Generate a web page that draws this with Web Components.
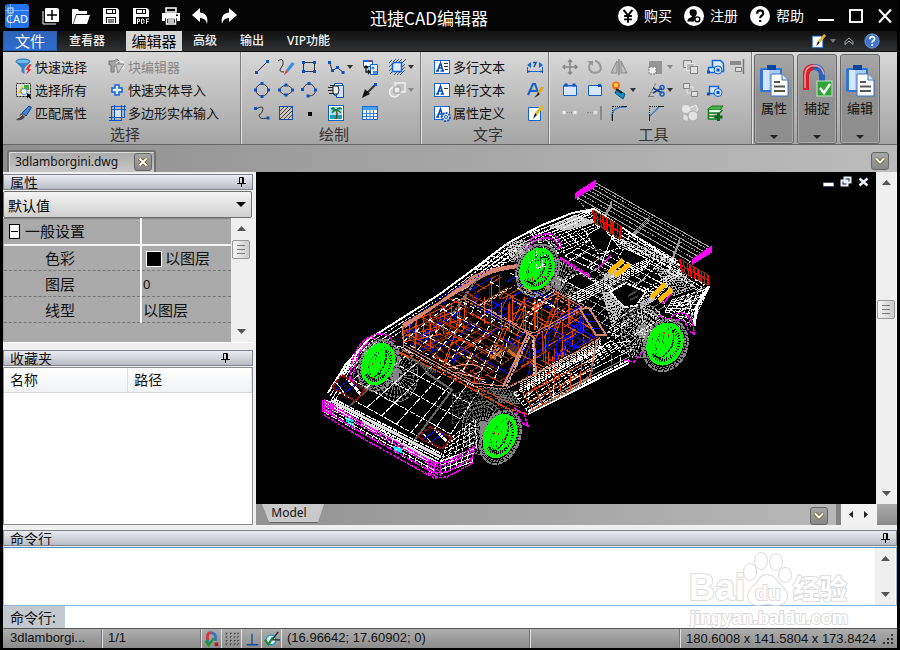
<!DOCTYPE html>
<html lang="zh-CN">
<head>
<meta charset="utf-8">
<title>迅捷CAD编辑器</title>
<style>
html,body{margin:0;height:100%;background:#000}
body{font:13px/16px "Noto Sans","Noto Sans CJK SC",sans-serif;color:#111}
</style>
</head>
<body>
<cad-app></cad-app>
<script>
const define = (name, css, html, setup) => customElements.define(name, class extends HTMLElement {
  connectedCallback() {
    if (this.shadowRoot) return;
    const root = this.attachShadow({ mode: 'open' });
    root.innerHTML = `<style>:host{display:block}*,:host{box-sizing:border-box}button{font:inherit;color:inherit;background:none;border:0;padding:0;margin:0;display:flex;align-items:center}${css}</style>` +
      (typeof html === 'function' ? html(this) : html);
    if (setup) setup(this, root);
  }
});

/* ---------- icons ---------- */
const n = (...p) => p.map(([x, y]) => `<rect x="${x - 1.5}" y="${y - 1.5}" width="3" height="3" fill="#0c50c8" stroke="none"/>`).join('');
const A = `<rect x="1.5" y="2.5" width="15" height="13" fill="#fff" stroke="#1464d8"/><path d="M3 13h3M7.5 13h3.5M4.500 13L7.500 5L10 13M5.500 10h4" fill="none" stroke="#0a4cb8" stroke-width="1.6"/>`;
const disk = `<path d="M1 1h14l2 2v14H1z" fill="#fff"/><path d="M4 2h10v5H4z" fill="#000"/><path d="M5 3h5v3H5zM11 3h2v3h-2z" fill="#fff"/>`;
const clip = `<path d="M2 4h20v24H2q-2 0-2-2V6q0-2 2-2z" fill="#2f74d8"/><path d="M3 6h17v20H3z" fill="#a9cbf5"/><path d="M3 6h6v20H3z" fill="#d4e6fc"/><rect x="7" y="1" width="9" height="5" fill="#0c459c"/><path d="M11 10h11l6 6v16H11z" fill="#fff" stroke="#3a6fc0"/><path d="M22 10v6h6" fill="#dde6f5" stroke="#3a6fc0"/><path d="M14 18h6M14 22.5h11M14 27h11" stroke="#555" stroke-width="2"/>`;
const I = {
  new: `<path d="M4 1h11q2 0 2 2v11q0 1-1 1H4q-1 0-1-1V2q0-1 1-1z" fill="#fff"/><path d="M10 3v10M5 8h10" stroke="#000" stroke-width="1.5"/><path d="M1 4v13h13" stroke="#fff" fill="none"/>`,
  open: `<path d="M0 17V2h6l1 2h8v3H4L1 17z" fill="#fff"/><path d="M4.500 8H18l-3 9H1.500z" fill="#fff"/>`,
  save: disk + `<path d="M4 10h10v6H4z" fill="#000"/><path d="M5 11h8v5H5z" fill="#fff"/><path d="M6 13h6M6 15h6" stroke="#000"/>`,
  pdf: disk + `<path d="M4 10h14v8H4z" fill="#000"/><path d="M5.500 17v-5h2v2.500h-2M9.500 12v4.500h1.500l1-1v-2.500l-1-1zM14.500 17v-5h2.500M14.500 14.500h2" stroke="#fff" fill="none"/>`,
  print: `<path d="M4 1h10v4H4z" fill="none" stroke="#fff" stroke-width="1.500"/><path d="M0 6h18v8h-3v-3H3v3H0z" fill="#fff"/><path d="M4.500 11h9v6h-9zM6 13h6M6 15h6" fill="none" stroke="#fff" stroke-width="1.500"/><rect x="14" y="7.500" width="2" height="1.500" fill="#000"/>`,
  undo: `<path d="M0 8L8 1v4.500q9 1 7 11.500q-1-6-7-6v4z" fill="#fff"/>`,
  redo: `<path d="M18 8L10 1v4.500Q1 6.500 3 17q1-6 7-6v4z" fill="#fff"/>`,
  buy: `<circle cx="9" cy="9" r="9" fill="#fff"/><path d="M5 3.500l4 5 4-5M9 8v7M5.500 9h7M5.500 12h7" fill="none" stroke="#000" stroke-width="1.700"/>`,
  user: `<circle cx="9" cy="9" r="9" fill="#fff"/><path d="M8 3q4 0 3.500 4q-.5 2-1.500 2.500v1l-1 3.500H3q0-3 4-4V9Q5 8 5 6q0-3 3-3z" fill="#000"/><circle cx="12" cy="12" r="2.200" fill="#fff" stroke="#000" stroke-width="1.300"/>`,
  help: `<circle cx="9" cy="9" r="9" fill="#fff"/><path d="M6.500 7q0-3 2.700-3t2.700 2.500q0 1.500-1.500 2.300Q9.200 9.500 9.200 11M9.200 12.500v2" fill="none" stroke="#000" stroke-width="2"/>`,
  helpblue: `<circle cx="9" cy="9" r="8" fill="#3c76cc" stroke="#7ba7e5"/><path d="M6.500 7q0-3 2.700-3t2.700 2.500q0 1.500-1.500 2.300Q9.200 9.500 9.200 11M9.200 12.500v2" fill="none" stroke="#fff" stroke-width="2"/>`,
  filter: `<ellipse cx="8" cy="3.500" rx="7" ry="2.500" fill="#70b8e8" stroke="#1d6fae"/><path d="M1 4q6 4 14 0L9.500 10v6L6.500 14v-4z" fill="#2f86c8"/><path d="M14 6l-4 6h3l-3 6 7-7h-3l3-5z" fill="#e5281f" stroke="#fff" stroke-width=".4"/>`,
  selall: `<rect x="1.500" y="2.500" width="14" height="13" fill="#ddd" stroke="#111" stroke-dasharray="2 1"/><rect x="9" y="4" width="5" height="5" fill="#3cae38"/><path d="M3 12l4-7 4 8z" fill="#f2b90c"/><circle cx="9" cy="10.500" r="3" fill="#fff" stroke="#4a8de0"/><path d="M12 12v5.500l1.500-1.500 2 2 1-1-2-2 1.500-1z" fill="#000"/>`,
  brush: `<path d="M7 9l7-7 2.500 1.500L11 12z" fill="#3f86dc" stroke="#173f7a"/><path d="M6 9l4 4-2 2q-3 2-7 1l3-3z" fill="#4a4a4a"/><path d="M3 14l4-3" stroke="#ccc"/>`,
  blockedit: `<path d="M1 3h5l3-2 2 2v4l-2 1H6v6H3V7H1z" fill="#a5a5a5" stroke="#777"/><circle cx="12" cy="7" r="4" fill="none" stroke="#fff"/><path d="M8 6h8l-6 9z" fill="#c9c9c9" stroke="#888"/>`,
  cross: `<path d="M7 4h4v3h3v4h-3v3H7v-3H4V7h3z" fill="#e3effd" stroke="#1266d6" stroke-width="1.500"/>`,
  poly: `<rect x="6" y="6" width="8" height="7" fill="#cfe0f5"/><path d="M3.500 3v14M6.500 1v16M13.500 1v15M16.500 1v13M3 2.500h15M3 5.500h15M1 13.500h15M1 16.500h13" stroke="#0b57c5" fill="none"/>`,
  line: `<path d="M4 14L14 4" stroke="#333"/>` + n([3.5, 14.5], [14.5, 3.5]),
  free: `<path d="M1 3q4-3 5 0t-2 7 3 4" stroke="#333" fill="none"/><path d="M9 12l6-8 2.500 2L11 14z" fill="#3b8de6"/><path d="M9 12l2 2-4 3z" fill="#e53030"/>`,
  rect: `<rect x="3.500" y="4.500" width="11" height="9" fill="none" stroke="#333"/>` + n([3.5, 4.5], [14.5, 4.5], [3.5, 13.5], [14.5, 13.5]),
  pline: `<path d="M2.500 4.500L5.500 13L10 9.500L16 14" stroke="#333" fill="none"/>` + n([2.5, 4.5], [5.5, 12.5], [10.5, 9.5], [16, 14.5]),
  insert: `<path d="M2.500 2.500h9v6h-9z" fill="#fff" stroke="#1266d6"/><path d="M2 3h6" stroke="#1266d6" stroke-width="2"/><path d="M8 3h3" stroke="#e02020" stroke-width="2"/><path d="M9.500 6.500h7v10h-7z" fill="#e8f1fd" stroke="#1266d6"/><circle cx="12" cy="10" r="1.500" fill="#4a8de0"/><path d="M12 13h4v3h-4z" fill="#4a8de0"/><path d="M5 8v6h4M3 10l2-2 2 2M7 12l2 2-2 2" fill="none" stroke="#111" stroke-width="1.300"/>`,
  region: `<path d="M1 5l3-3M1 9l3-3M1 13l3-3M2 16l3-3M5 4l3-3M8 4l3-3M11 4l3-3M14 5l4-4M14 9l3-3M14 12l3-3M6 17l3-3M9 17l3-3M12 17l5-5" stroke="#456"/><path d="M4.500 5.500l2-1h7v9h-9z" fill="#dceaff" stroke="#1266d6" stroke-width="1.500"/>`,
  circle: `<circle cx="9" cy="9" r="6" fill="none" stroke="#333"/>` + n([9, 2.5], [2.5, 9], [15.5, 9], [9, 15.5]),
  ellipse: `<ellipse cx="9" cy="9" rx="6" ry="4.500" fill="none" stroke="#333"/>` + n([9, 4], [2.5, 9], [15.5, 9], [9, 14]),
  arc: `<path d="M3 9q1-6 6-6t6 6-7 6" fill="none" stroke="#333"/>` + n([2.5, 8.5], [9, 2.5], [15.5, 9], [8, 15]),
  sheet: `<path d="M7.500 2.500h8v12h-8z" fill="#fff" stroke="#1455ac"/><path d="M9.500 4.500h7v12h-7z" fill="#cfe2fb" stroke="#1455ac"/><path d="M6 5h5q2 4 0 8H6z" fill="#eee" stroke="#222"/><path d="M1 6.500h5M3 4.500h4M1 9.500h5M2 12.500h5" stroke="#222" fill="none"/>`,
  ray: `<path d="M4 14L14 4" stroke="#333" stroke-width="2"/><path d="M1 17l3-9 5 5z" fill="#111"/>` + n([14.5, 3.5]),
  union: `<path d="M7 2h10v9H7z" fill="#c4c4c4" stroke="#eee" stroke-width="1.500"/><circle cx="6.500" cy="11" r="5" fill="#ccc" stroke="#f2f2f2" stroke-width="1.500"/><path d="M6 6h6v6H6z" fill="#eee" stroke="#999"/>`,
  spline: `<path d="M3 5Q10 1 10 5T6 11q0 5 8 3" fill="none" stroke="#333"/>` + n([2.5, 4.5], [15, 14]),
  hatch: `<rect x="2.500" y="2.500" width="13" height="13" fill="#c9c4ba" stroke="#1a4a9a"/><path d="M3 7l4-4M3 11l8-8M3 15l12-12M7 15l8-8M11 15l4-4" stroke="#444"/>`,
  point: `<rect x="8" y="8" width="4" height="4" fill="#000"/>`,
  image: `<rect x="1.500" y="1.500" width="15" height="15" fill="#fff" stroke="#0a5fc2"/><path d="M3 3h12v8H3z" fill="#a6dcf5"/><path d="M3 11h12v4H3z" fill="#18a0c0"/><path d="M9 15q2-5 0-9" stroke="#6b4510" fill="none" stroke-width="1.500"/><path d="M9 6Q6 2 4 5q2 0 5 1Q5 6 5 9q2-2 4-3 4-4 6-1-3-1-6 1 4 0 5 3-2-2-5-3z" fill="#0c7a38" stroke="#0c7a38"/>`,
  table: `<rect x="1.500" y="2.500" width="15" height="13" fill="#fff" stroke="#1868d0"/><path d="M2 3h14v3H2z" fill="#4aa0f0"/><path d="M2 9.500h14M2 12.500h14M5.500 6v10M9 6v10M12.500 6v10" stroke="#3480da"/>`,
  mtext: A + `<path d="M11 5.500h4M11 8.500h4M12 11.500h3" stroke="#333"/>`,
  stext: A + `<path d="M11 7.500h4" stroke="#333"/>`,
  attr: A + `<circle cx="13" cy="13" r="4" fill="#d8e8ff" stroke="#1a5ab8" stroke-width="2" stroke-dasharray="2 1"/><circle cx="13" cy="13" r="1.500" fill="#fff" stroke="#1a5ab8"/>`,
  dim: `<path d="M1.500 9v6M16.500 9v6M2 13.500h14" stroke="#1266d6" fill="none"/><path d="M1 7l4-3v6zM17 7l-4-3v6z" fill="#1266d6"/><path d="M7 4.500h3L8 9M1 13.500h3M14 13.500h3" stroke="#0a4cb8" fill="none" stroke-width="1.500"/>`,
  tstyle: `<path d="M2 14L7 3h2l4 11M4 10h7" stroke="#1460c8" fill="none" stroke-width="2"/><path d="M17 6l-5 6" stroke="#e3a012" stroke-width="2.500"/><path d="M13 11l-5 6 5-3z" fill="#222"/>`,
  edit: `<path d="M2.500 3.500h10l2 2v11h-12z" fill="#fff" stroke="#0f62cf"/><path d="M17 2l-7 8" stroke="#e8b820" stroke-width="3"/><path d="M9 9l2 2-4 4z" fill="#222"/>`,
  move: `<path d="M9 2v14M2 9h14M7 4l2-2 2 2M7 14l2 2 2-2M4 7L2 9l2 2M14 7l2 2-2 2" fill="none" stroke="#878787" stroke-width="1.500"/>`,
  rotate: `<path d="M4 5Q1 14 9 15q8-1 5-8-2-4-5-4" fill="none" stroke="#999" stroke-width="2"/><path d="M1 3h6v5z" fill="#999"/>`,
  mirror: `<path d="M7 3v12H1zM11 3v12h6z" fill="#bdbdbd" stroke="#888"/><path d="M9 1v16" stroke="#666"/>`,
  scale: `<path d="M2 3h13v13H2z" fill="#969696"/><rect x="2" y="9" width="7" height="7" fill="#eee" stroke="#777" stroke-dasharray="2 1"/>`,
  copy: `<path d="M2.500 2.500h8v7h-8z" fill="#d9d9d9" stroke="#858585"/><path d="M5.500 5.500h8v7h-8z" fill="#bbb" stroke="#eee"/><path d="M9.500 8.500h7v7h-7z" fill="#e2e2e2" stroke="#858585"/>`,
  array: `<path d="M6 6h6v6H6z" fill="#bbb" stroke="#eee"/><path d="M2.500 2.500h6v5h-6zM10.500 10.500h6v5h-6z" fill="#dedede" stroke="#858585"/>`,
  xform: `<path d="M6.500 2.500h8l3 3v8h-11z" fill="#dceaff" stroke="#1266d6" stroke-width="1.500"/><path d="M2.500 9.500h9v5h-9z" fill="#dceaff" stroke="#1266d6" stroke-width="1.500"/><circle cx="12" cy="12" r="4" fill="#cfe2fb" stroke="#1266d6"/>` + n([2.5, 14], [12, 12]),
  xform2: `<path d="M3.500 5.500h9v7h-9z" fill="#dceaff" stroke="#1266d6" stroke-width="1.500"/><circle cx="12" cy="11.500" r="4" fill="#cfe2fb" stroke="#1266d6"/>` + n([2.5, 13], [12, 11.5]),
  align: `<path d="M1 3h11v4H1z" fill="#8a8a8a"/><path d="M6.500 9.500h6v4h-6z" fill="#ddd" stroke="#777"/><path d="M14.500 1v15" stroke="#777" stroke-width="1.500"/>`,
  box: `<path d="M2.500 4.500h13v10h-13z" fill="#d6e8ff" stroke="#1a5fc0"/><path d="M3 5h12" stroke="#1a5fc0"/>` + n([5, 4], [13, 4]),
  box2: `<path d="M2.500 4.500h13v10h-13z" fill="#d6e8ff" stroke="#1a5fc0"/>` + n([13.5, 4.5]),
  explode: `<path d="M7 8l8 5-2 5-8-6z" fill="#168bc2" stroke="#0a537f"/><circle cx="6" cy="4.500" r="4" fill="#f07020"/><circle cx="6" cy="4" r="2" fill="#ffd34a"/><path d="M6 8l6 4" stroke="#222" stroke-width="2"/>`,
  trim: `<path d="M2 15L9 2" stroke="#555" stroke-dasharray="2 1"/><path d="M6 7l9 5M15 7L6 12" stroke="#14438a" stroke-width="1.500"/><circle cx="15" cy="6.500" r="2" fill="none" stroke="#1a5fc0" stroke-width="1.500"/><circle cx="15" cy="13" r="2" fill="none" stroke="#1a5fc0" stroke-width="1.500"/><path d="M1 15.500h6" stroke="#777"/>`,
  brk: `<path d="M1 6.500h4v4H1zM12 6.500h4v4h-4z" fill="#eee" stroke="#bbb"/><path d="M6 8.500h5" stroke="#888" stroke-dasharray="1 1"/>`,
  extend: `<path d="M1 8.500h4M6 8.500h6" stroke="#888" stroke-dasharray="2 1"/><path d="M7 6h5v5H7z" fill="#ddd" stroke="#aaa"/><path d="M15 2v14" stroke="#888" stroke-width="2"/>`,
  fillet: `<path d="M2 17V10q2-7 11-7h3" fill="none" stroke="#3680cc" stroke-width="1.500"/><path d="M2.500 2v15M3 2.500h13" stroke="#222" stroke-dasharray="1 1"/><path d="M2.500 11v6M11 2.500h6" stroke="#222"/>`,
  chamfer: `<path d="M3 12l9-9" stroke="#3680cc" stroke-width="1.500"/><path d="M2.500 2v15M3 2.500h13" stroke="#222" stroke-dasharray="1 1"/><path d="M2.500 11v6M11 2.500h6" stroke="#222"/>`,
  parts: `<circle cx="5" cy="5" r="4" fill="#e6e6e6"/><path d="M8 4l7-3 2 5-7 4z" fill="#ccc" stroke="#eee"/><path d="M3 10l5 3-2 4-4-2z" fill="#ddd"/><circle cx="12" cy="12" r="5" fill="#e2e2e2" stroke="#aaa"/>`,
  layers: `<path d="M2 5l4-3h11l-3 4H2z" fill="#49b547" stroke="#16751c"/><path d="M2.500 6v3h11l3-3M2.500 9v3h11M2.500 12v3h9" fill="#e9f7e8" stroke="#187a22" stroke-width="1.500"/><path d="M12.500 9v8M8.500 13h8" stroke="#0d6a1c" stroke-width="3"/>`,
  magstat: `<path d="M4 14V6q0-4 4-4t5 4v5" fill="none" stroke="#3a6ec8" stroke-width="3"/><path d="M4 10V6q0-4 4-4" fill="none" stroke="#d8383a" stroke-width="3"/><path d="M2 11l3 5 6-8" fill="none" stroke="#1b9a26" stroke-width="2.500"/><rect x="12" y="13" width="4" height="4" fill="#c01616"/>`,
  grid: [3, 7, 11, 15].map(y => [2, 7, 11, 15].map(x => `<rect x="${x}" y="${y - 1}" width="2" height="2" fill="#333"/><rect x="${x + 1}" y="${y}" width="1" height="1" fill="#eee"/>`).join('')).join(''),
  ortho: `<path d="M9 3v12M3 15.500h13" stroke="#144da0" stroke-width="1.500" fill="none"/>`,
  osnap: `<circle cx="8" cy="10" r="5.500" fill="#e7f4fb" stroke="#1a9cd0" stroke-width="1.500"/><path d="M9 10l7-9M9 10h9" stroke="#222" stroke-width="1.500"/><path d="M1 10l4 5 5-8" stroke="#1b8a26" stroke-width="2.500" fill="none"/>`,
};
define('cad-icon', `:host{display:inline-block;width:var(--s,18px);height:var(--s,18px);flex:none}svg{display:block;width:100%;height:100%;overflow:visible}`,
  el => `<svg viewBox="0 0 18 18" aria-hidden="true">${I[el.getAttribute('name')] || ''}</svg>`);

define('cad-bigicon', `:host{width:28px;height:32px}svg{display:block;width:28px;height:32px;overflow:visible}`, el =>
  `<svg viewBox="0 0 28 32" aria-hidden="true">${el.getAttribute('name') === 'clip' ? clip :
  `<path d="M3 26V12Q3 3 11 3t8 9v7" fill="none" stroke="#2d63c0" stroke-width="6"/><path d="M3 26V12Q3 3 11 3" fill="none" stroke="#d91e25" stroke-width="6"/><path d="M2 24V12Q2 2 11 1.500q8 0 10 9" fill="none" stroke="#f4a0a0" stroke-width="1.500"/><rect x="14" y="17" width="15" height="15" fill="#2fa23a" stroke="#bfe6c0"/><path d="M17 24l4 5 6-9" stroke="#fff" stroke-width="2.500" fill="none"/>`}</svg>`);

/* ---------- title bar ---------- */
define('title-bar', `:host{display:flex;align-items:center;height:31px;background:#050505;color:#fff;padding:0 5px 0 2px;font-size:14px}
.logo{width:24px;height:24px;margin-right:7px}.logo svg{display:block}
.q button{width:30px;height:30px;justify-content:center}.q,.r,.w{display:flex;align-items:center}.q button:last-child{width:24px}
h1{flex:1;margin:0;text-align:center;font:17px/24px "Noto Sans CJK SC",sans-serif;padding-top:4px}
.r button{gap:6px;margin-right:12px;--s:20px}.r{margin-right:2px}.w button{height:20px;width:14px;margin-left:15px;justify-content:center}.w button:first-child{margin-left:0;width:16px}`,
`<div class="logo"><svg width="24" height="24"><rect width="24" height="24" rx="3" fill="#2374ea"/><path d="M0 6.500h24M5.500 0v24" stroke="#6ca8f8"/><rect x="3" y="4" width="5" height="5" fill="none" stroke="#d8e8ff"/><text x="12" y="19" text-anchor="middle" font-family="Noto Sans" font-size="11" fill="#fff">CAD</text></svg></div>
<div class="q">${['new', 'open', 'save', 'pdf', 'print', 'undo', 'redo'].map(i => `<button aria-label="${i}"><cad-icon name="${i}"></cad-icon></button>`).join('')}</div>
<h1>迅捷CAD编辑器</h1>
<div class="r"><button><cad-icon name="buy"></cad-icon>购买</button><button><cad-icon name="user"></cad-icon>注册</button><button><cad-icon name="help"></cad-icon>帮助</button></div>
<div class="w"><button aria-label="最小化"><svg width="16" height="18"><path d="M0 13h16" stroke="#fff" stroke-width="2"/></svg></button><button aria-label="最大化"><svg width="14" height="16"><rect x="1" y="2" width="12" height="12" fill="none" stroke="#fff" stroke-width="2"/></svg></button><button aria-label="关闭"><svg width="14" height="16"><path d="M1 1.500l12 13M13 1.500l-12 13" stroke="#fff" stroke-width="2"/></svg></button></div>`);

/* ---------- tabs ---------- */
define('tab-strip', `:host{display:flex;height:21px;background:linear-gradient(#111,#303133);border-bottom:1px solid #111;color:#f4f4f4}
nav{display:flex;flex:1}nav button{padding:0 12px 0 11px;font-weight:500;font-size:12px;white-space:nowrap;height:20px}
nav .file{width:54px;justify-content:center;padding:0;font-size:15px;font-weight:400;background:linear-gradient(#2f62b4,#2d6cd0);border:1px solid #2b5aa5;border-top:0}
nav .view{margin-right:9px;padding-left:12px}nav .on{width:56px;padding:0;justify-content:center;font-size:15px;color:#000;background:#d6d6d6;height:20px;font-weight:400}
.r{display:flex;align-items:center;gap:0;padding-right:17px;--s:16px}.d{width:24px;justify-content:flex-start}.d:after{content:"";border:3px solid transparent;border-top:4px solid #777;border-bottom:0;margin-left:4px}.u{width:30px;justify-content:center}`,
`<nav><button class="file">文件</button><button class="view">查看器</button><button class="on">编辑器</button><button>高级</button><button>输出</button><button>VIP功能</button></nav>
<div class="r"><button class="d" aria-label="编辑"><cad-icon name="edit"></cad-icon></button><button class="u" aria-label="收起"><svg width="10" height="8"><path d="M1 4.500l4-3.500 4 3.500v3L5 4 1 7.500z" fill="none" stroke="#aaa"/></svg></button><button aria-label="帮助"><cad-icon name="helpblue"></cad-icon></button></div>`);

/* ---------- ribbon ---------- */
define('tool-button', `:host{display:flex;height:23px;align-items:center}button{gap:2px;white-space:nowrap;height:22px;text-align:left}:host([off]) button{color:#868686}
:host([drop]) button:after{content:"";border:3px solid transparent;border-top:4px solid #333;border-bottom:0}:host([off][drop]) button:after{border-top-color:#888}`,
el => `<button aria-label="${el.textContent || el.getAttribute('icon')}"><cad-icon name="${el.getAttribute('icon')}"></cad-icon><slot></slot></button>`);
define('ribbon-group', `:host{display:flex;flex-direction:column;padding:3px 0 1px 11px;border-right:1px solid #7c7c7c;box-shadow:1px 0 #e2e2e2;margin:0 0 0 1px}
.g{display:grid;grid-template-columns:var(--cols);grid-auto-rows:23px;flex:1}.l{text-align:center;font-size:15px;line-height:20px;margin-left:-5px;color:#333}`,
el => `<div class="g"><slot></slot></div><div class="l">${el.getAttribute('label')}</div>`);
define('big-button', `button{flex-direction:column;width:40px;height:90px;border:1px solid #686868;border-radius:3px;background:linear-gradient(#a8a8a8,#919191 40%,#8d8d8d);padding-top:9px;font-size:13px;box-shadow:inset 0 0 0 1px #a9a9a9}
slot{display:block;margin-top:4px}i{margin-top:auto;margin-bottom:4px;border:4px solid transparent;border-top:4px solid #222;border-bottom:0}`,
el => `<button><cad-bigicon name="${el.getAttribute('icon')}"></cad-bigicon><slot></slot><i></i></button>`);
const tb = s => s.trim().split(/\s+/).map(t => { if (t === '_') return '<span></span>'; const [i, f = '', l = ''] = t.split(':'); return `<tool-button icon="${i}"${f.includes('o') ? ' off' : ''}${f.includes('d') ? ' drop' : ''}>${l}</tool-button>`; }).join('');
define('cad-ribbon', `:host{display:flex;height:93px;background:linear-gradient(#d8d8d8,#c5c5c5 35%,#a5a5a5);border-bottom:1px solid #666}
.b{display:flex;gap:3px;padding:2px 0 0 2px}`,
`<ribbon-group label="选择" style="--cols:93px 1fr;width:237px">${tb('filter::快速选择 blockedit:o:块编辑器 selall::选择所有 cross::快速实体导入 brush::匹配属性 poly::多边形实体输入')}</ribbon-group>
<ribbon-group label="绘制" style="--cols:24px 23px 27px 34px 27px 1fr;width:179px">${tb('line free rect pline:d insert region:d circle ellipse arc sheet ray union:od spline hatch point image table')}</ribbon-group>
<ribbon-group label="文字" style="--cols:93px 1fr;width:127px">${tb('mtext::多行文本 dim stext::单行文本 tstyle attr::属性定义 edit')}</ribbon-group>
<ribbon-group label="工具" style="--cols:25px 24px 37px 34px 25px 23px 1fr;width:202px">${tb('move:o rotate:o mirror:o scale:od copy:o xform align:o box box2 explode:d trim:d array:o xform2 _ brk:o extend:o fillet chamfer parts:o layers')}</ribbon-group>
<div class="b"><big-button icon="clip">属性</big-button><big-button icon="magnet">捕捉</big-button><big-button icon="clip">编辑</big-button></div>`);

/* ---------- document tabs ---------- */
define('chevron-button', `button{width:18px;height:18px;border:1px solid #666;border-radius:3px;background:linear-gradient(#a5a5a5,#888);justify-content:center}`,
el => `<button aria-label="${el.getAttribute('label')}"><svg width="10" height="8">${el.hasAttribute('close') ? '<path d="M1.500 .5l7 7M8.500 .5l-7 7" stroke="#6b5a10" stroke-width="3.500"/><path d="M1.500 .5l7 7M8.500 .5l-7 7" stroke="#fff" stroke-width="2"/>' : '<path d="M1 1.500l4 4 4-4" fill="none" stroke="#6b5a10" stroke-width="3.500"/><path d="M1 1.500l4 4 4-4" fill="none" stroke="#fff" stroke-width="2"/>'}</svg></button>`);
define('doc-bar', `:host{display:flex;align-items:flex-end;justify-content:space-between;height:27px;background:linear-gradient(90deg,#8f8f8f,#bcbcbc);padding:0 8px 0 4px}
.t{display:flex;align-items:center;gap:16px;height:22px;border:2px solid #707070;border-bottom:0;border-radius:3px 3px 0 0;background:linear-gradient(#a9a9a9,#c8c8c8);padding:0 2px 0 6px;font-size:12px;box-shadow:inset 1px 1px #ddd}.e{margin-bottom:2px}`,
`<div class="t"><span>3dlamborgini.dwg</span><chevron-button close label="关闭"></chevron-button></div><chevron-button class="e" label="文档列表"></chevron-button>`);

/* ---------- docked panels ---------- */
define('dock-panel', `:host{display:flex;flex-direction:column}header{display:flex;justify-content:space-between;align-items:center;height:16px;flex:none;border:1px solid #80838a;background:linear-gradient(#ebedf2,#b9bcc5);padding:0 6px;overflow:hidden;font-size:14px;line-height:15px}
.b{flex:1;min-height:0;display:flex;flex-direction:column;padding-top:1px}:host([inset]) header{padding-right:22px}`,
el => `<header><span>${el.getAttribute('label')}</span><button aria-label="固定"><svg width="9" height="10"><path d="M2.500 6V.5h4V6M5.500 1v5M0 6.500h9M4.500 7v3" fill="none" stroke="#000"/></svg></button></header><div class="b"><slot></slot></div>`);
define('scroll-bar', `:host{display:flex;flex-direction:column;width:20px;background:#efefef;align-items:center;justify-content:space-between;padding:8px 0}
button{width:9px;height:5px}svg{display:block}.th{width:18px;height:19px;border:1px solid #989898;border-radius:2px;background:linear-gradient(90deg,#f6f6f6,#ccc);justify-content:center}`,
el => `<button aria-label="上"><svg width="9" height="5"><path d="M0 5L4.500 0 9 5z" fill="#555"/></svg></button>${el.hasAttribute('pos') ? `<div style="flex:${el.getAttribute('pos')}"></div><button class="th" aria-label="滑块"><svg width="9" height="11"><path d="M0 1.500h8M0 5.500h8M0 9.500h8" stroke="#777"/></svg></button><div style="flex:${100 - el.getAttribute('pos')}"></div>` : ''}<button aria-label="下"><svg width="9" height="5"><path d="M0 0L4.500 5 9 0z" fill="#555"/></svg></button>`);
define('property-grid', `:host{display:flex;flex-direction:column}.s{position:relative;height:27px;margin-right:1px}
select{appearance:none;display:block;width:100%;height:27px;border:1px solid #707070;border-radius:2px;background:linear-gradient(#f4f4f4,#cfcfcf);font:14px "Noto Sans CJK SC",sans-serif;padding:0 4px;color:#000}
.s:after{content:"";position:absolute;right:6px;top:11px;border:5px solid transparent;border-top:5px solid #000;border-bottom:0}
.g{display:flex;height:124px;background:#efefef;border-left:1px solid #999;padding-right:2px}.t{flex:1;min-width:0;background:#aaa}table{width:100%;border-collapse:collapse;table-layout:fixed;font-size:15px}
td{height:26px;padding:0 0 0 1px;border-bottom:1px dashed #777;line-height:20px;vertical-align:middle}td:first-child{width:137px;padding-left:41px;border-right:2px solid #f5f5f5}
tr:first-child td{border-bottom:2px solid #f5f5f5;border-top:1px solid #888}tr:first-child td:first-child{padding-left:5px}
.h{display:flex;align-items:center;gap:5px}.m{width:11px;height:15px;border:1px solid #000;background:#fff;justify-content:center}.m:after{content:"";width:7px;height:1px;background:#000}
.k{display:inline-block;width:16px;height:16px;border:1px solid #fff;background:#000;margin:0 3px;vertical-align:-3px}.z{font-size:13px}`,
`<div class="s"><select aria-label="属性集"><option>默认值</option></select></div><div class="g"><div class="t"><table><tbody><tr><td><div class="h"><button class="m" aria-label="折叠"></button>一般设置</div></td><td></td></tr><tr><td>色彩</td><td><span class="k"></span>以图层</td></tr><tr><td>图层</td><td class="z">0</td></tr><tr><td>线型</td><td>以图层</td></tr></tbody></table></div><scroll-bar pos="12"></scroll-bar></div>`);
define('favorites-list', `:host{flex:1;background:#fff;border:1px solid #8a8d92}table{width:100%;border-collapse:collapse;table-layout:fixed;font-size:14px}th{height:24px;font-weight:400;text-align:left;padding:1px 0 0 6px;background:linear-gradient(#fff,#f1f2f4);border-right:1px solid #dfe0e3;border-bottom:1px solid #d9dadd}`,
`<table><thead><tr><th>名称</th><th>路径</th></tr></thead></table>`);

/* ---------- wireframe ---------- */
function drawCar() {
  const out = [];
  let seed = 7;
  const rnd = () => (seed = (seed * 16807) % 2147483647) / 2147483647;
  const P = (d, c, w = 1, dash = '') => out.push(`<path d="${d}" stroke="${c}" stroke-width="${w}"${dash ? ` stroke-dasharray="${dash}"` : ''}/>`);
  const L = (pts, c, w, dash) => P('M' + pts.map(p => p.join(' ')).join('L'), c, w, dash);
  const mix = (a, b, t) => [Math.round((a[0] + (b[0] - a[0]) * t) * 10) / 10, Math.round((a[1] + (b[1] - a[1]) * t) * 10) / 10];
  const mesh = ([a, b, c, d], u, v, col, dash, w) => {
    let s = '';
    for (let i = 0; i <= u; i++) s += `M${mix(a, b, i / u)}L${mix(d, c, i / u)}`;
    for (let i = 0; i <= v; i++) s += `M${mix(a, d, i / v)}L${mix(b, c, i / v)}`;
    P(s, col, w, dash);
  };
  const bundle = (a, b, k, spread, col, dash) => { let s = ''; for (let i = 0; i < k; i++) { const o = (i / (k - 1) - .5) * spread; s += `M${a[0]} ${a[1] + o}L${b[0]} ${b[1] + o * .8}`; } P(s, col, 1, dash); };
  const clutter = (id, poly, k, cols, dirs, len, dash) => {
    const xs = poly.map(p => p[0]), ys = poly.map(p => p[1]), x0 = Math.min(...xs), x1 = Math.max(...xs), y0 = Math.min(...ys), y1 = Math.max(...ys);
    out.push(`<clipPath id="${id}"><path d="M${poly.join('L')}z"/></clipPath><g clip-path="url(#${id})">`);
    for (let i = 0; i < k; i++) { const x = x0 + rnd() * (x1 - x0), y = y0 + rnd() * (y1 - y0), [dx, dy] = dirs[i % dirs.length], l = len * (.4 + rnd());
      P(`M${x | 0} ${y | 0}l${(dx * l).toFixed(1)} ${(dy * l).toFixed(1)}`, cols[(rnd() * cols.length) | 0], 1, dash); }
    out.push('</g>');
  };
  const F = [.82, -.5], R = [.86, .46], V = [0, 1];
  const hub = (x, y, rx, ry, c = '#858585') => {
    let s = ''; for (let i = 0; i < 30; i++) { const t = i / 30 * 6.283; s += `M${x} ${y}L${(x + rx * Math.cos(t)).toFixed(1)} ${(y + ry * Math.sin(t)).toFixed(1)}`; }
    P(s, c, 1, '3 1');
    [1, .82].forEach(k => out.push(`<ellipse cx="${x}" cy="${y}" rx="${rx * k}" ry="${ry * k}" stroke="${c}" stroke-dasharray="3 1"/>`));
    out.push(`<ellipse cx="${x}" cy="${y}" rx="3" ry="6" fill="#858585" stroke="none"/>`);
  };
  const wheel = (x, y, rx, ry) => {
    out.push(`<g transform="rotate(22 ${x} ${y})">`);
    [1.08, 1.16, 1.26].forEach((k, i) => out.push(`<ellipse cx="${x + 1}" cy="${y + 1}" rx="${rx * k}" ry="${ry * k}" stroke="#858585" stroke-width="${i > 1 ? 2 : 1}" stroke-dasharray="${i > 1 ? '5 1' : '2 1'}"/>`));
    out.push(`<ellipse cx="${x}" cy="${y}" rx="${rx}" ry="${ry}" fill="#0f0" stroke="#0f0" stroke-width="2"/>`);
    let s = ''; for (let i = 0; i < 22; i++) { const t = -1.3 + i / 22 * 3.6; const a = .68 + (i % 2) * .05; s += `M${(x + rx * a * Math.cos(t)).toFixed(1)} ${(y + ry * a * Math.sin(t)).toFixed(1)}L${(x + rx * .88 * Math.cos(t)).toFixed(1)} ${(y + ry * .88 * Math.sin(t)).toFixed(1)}`; }
    P(s, '#000', 1);
    P(`M${x + 2} ${y - ry * .75}Q${x + rx * .75} ${y} ${x} ${y + ry * .75}`, '#020', 1.5, '3 1');
    P(`M${x} ${y - ry * .85}Q${x - rx} ${y} ${x - 2} ${y + ry * .7}`, '#053', 1, '1 2');
    P(`M${x - 5} ${y + ry * .7}l10 2`, '#000', 1, '2 1');
    out.push('</g>');
    for (let i = 0; i < 18; i++) out.push(`<rect x="${(x + (rnd() - .6) * rx * 1.2) | 0}" y="${(y + (rnd() - .5) * ry * 1.3) | 0}" width="1" height="2" fill="${i % 3 ? '#052' : '#c22'}" stroke="none"/>`);
  };
  const W = '#fff', G = '#999', D = '#555', M = '#f0f', O = '#f04400', B = '#0808ff', S = '#d68470';

  /* hubs behind the body */
  hub(396, 375, 22, 27); hub(483, 428, 21, 27); hub(558, 283, 20, 24, '#777'); hub(643, 331, 22, 27);

  /* spoiler */
  [[0, 0], [.12, 1], [.3, 0], [.45, 1], [.62, 0], [.8, 1], [1, 0]].forEach(([t, k]) => L([mix([596, 183], [575, 196], t), mix([711, 248], [691, 262], t)], '#a5a5a5', 1, k ? '2 1' : ''));
  L([[575, 196], [597, 222], [680, 268]], G, 1, '2 1');
  bundle([612, 203], [604, 218], 3, 4, G); bundle([650, 218], [632, 236], 3, 4, G); bundle([680, 240], [672, 260], 3, 4, G);
  bundle([596, 183], [575, 196], 6, 6, M); bundle([712, 249], [692, 262], 6, 6, M);
  L([[596, 183], [575, 196]], M, 2); L([[712, 249], [692, 262]], M, 2);

  /* rear deck and tail */
  mesh([[530, 233], [592, 210], [612, 230], [552, 256]], 9, 9, W, '2 1');
  mesh([[550, 227], [575, 215], [595, 222], [567, 230]], 10, 9, '#c4c4c4');
  mesh([[593, 210], [708, 279], [700, 290], [598, 230]], 13, 4, W, '4 1');
  mesh([[565, 256], [603, 232], [680, 272], [655, 300]], 6, 4, W, '3 1');
  mesh([[552, 258], [640, 302], [610, 327], [540, 290]], 9, 5, '#b8b8b8', '2 1');
  mesh([[655, 268], [682, 271], [695, 288], [673, 296]], 10, 10, '#b5b5b5', '2 1');
  mesh([[605, 270], [655, 298], [630, 312], [588, 285]], 10, 6, '#777', '2 1');
  out.push('<path d="M587 235l15-9 18 22-22 6z M624 248l26 12-8 10-24-12z M565 281l15-8 18 9-16 8z" fill="#000" stroke="#fff" stroke-dasharray="3 1"/>');
  bundle([618, 242], [676, 262], 5, 8, '#c8c8c8', '3 1');
  bundle([568, 302], [650, 262], 6, 11, W, '4 1');
  bundle([640, 297], [690, 265], 3, 7, W, '2 1');
  L([[615, 230], [602, 262], [626, 276]], W, 1); L([[560, 258], [591, 277]], M, 3, '3 1'); L([[598, 268], [611, 256]], M, 1.5);
  clutter('deck', [[548, 258], [585, 238], [650, 280], [640, 320], [605, 335], [555, 300]], 75, [W, '#aaa', '#444'], [F, R], 22, '3 1');
  out.push('<path d="M610 292l16-9 20 9-10 14-12 1z" fill="#000" stroke="#fff" stroke-width="2" stroke-dasharray="4 1"/><path d="M628 296l9-5M630 300l8-4" stroke="#444" stroke-width="2"/>');
  mesh([[602, 292], [608, 292], [625, 308], [612, 325]], 10, 12, '#c5c5c5', '2 1');
  bundle([604, 278], [616, 270], 5, 6, '#c0c0c0'); bundle([640, 306], [655, 297], 5, 6, '#c0c0c0');
  mesh([[672, 300], [709, 288], [694, 320], [665, 312]], 7, 6, W, '4 1');
  mesh([[604, 335], [648, 306], [660, 312], [632, 358]], 9, 7, '#ccc', '2 2');
  clutter('fender', [[604, 334], [660, 296], [709, 286], [693, 326], [640, 350], [605, 360]], 80, [W, W, '#777'], [[.2, 1], F, R], 20, '3 1');
  P('M594 209L708 284', W, 2, '8 1'); P('M709 286L697 306L694 326', W, 3);

  /* left side and roof rails */
  [[0, 0], [2, 3], [4, 6], [6, 9]].forEach(([x, y], i) => L([[328 + x, 393 + y], [346 + x, 364 + y], [369 + x, 339 + y], [399 + x, 320 + y], [440 + x, 294 + y], [475 + x, 268 + y], [508 + x, 243 + y], [540 + x, 226 + y], [572 + x, 213 + y], [594, 209]], W, i ? 1 : 2, i % 2 ? '3 1' : ''));
  mesh([[475, 270], [508, 243], [530, 250], [494, 269]], 6, 4, W, '3 1');
  mesh([[506, 244], [524, 240], [530, 250], [512, 262]], 9, 9, '#bbb', '2 1');
  P('M524 247q8-12 22-13t15 14M526 250q8-12 20-12t13 12', M, 1.5, '3 1');
  P('M514 262q4-17 20-21t24 9M516 266q4-19 20-21t20 8', '#858585', 1.5, '3 1');

  /* hood */
  mesh([[337, 391], [399, 346], [480, 389], [441, 449]], 4, 7, W, '5 1');
  mesh([[408, 356], [420, 362], [436, 372], [428, 372]], 5, 5, D, '2 1');
  mesh([[452, 394], [486, 388], [519, 402], [452, 424]], 9, 7, D, '2 1');
  mesh([[490, 388], [516, 392], [520, 404], [500, 402]], 8, 5, '#777', '2 1');
  L([[345, 410], [375, 383], [392, 372]], D, 2); L([[411, 445], [452, 390], [425, 372]], '#666', 2);
  L([[399, 352], [460, 382], [506, 408], [527, 414]], O, 1.5, '5 1'); L([[402, 350], [470, 384], [520, 408]], O, 1, '4 1');
  [0, 3, 6, 9].forEach((o, i) => L([[334 - o, 399 + o / 2], [442 - o / 3, 454 + o]], i % 2 ? '#ddd' : W, i === 1 ? 3 : 1.5, i % 2 ? '' : '5 1'));
  mesh([[326, 400], [436, 461], [433, 473], [324, 412]], 18, 4, W, '6 2');
  L([[362, 422], [378, 431]], '#ddd', 5); L([[404, 446], [430, 460]], '#ddd', 5);
  mesh([[440, 461], [474, 449], [472, 462], [440, 474]], 6, 3, W);
  mesh([[330, 390], [348, 364], [366, 342], [352, 366]], 6, 3, W, '2 1');
  mesh([[449, 439], [475, 420], [477, 447], [441, 462]], 5, 5, W, '3 1');
  [0, 3, 10, 15].forEach(o => L([[324, 400 + o], [362, 423 + o], [434, 463 + o], [447, 462 + o], [473, 448 + o]], M, 1.5, o % 2 ? '3 1' : '7 1'));
  mesh([[322, 400], [333, 404], [333, 415], [322, 411]], 4, 4, M); mesh([[429, 460], [441, 465], [440, 478], [428, 473]], 4, 4, M, '3 1');
  [[[342, 375], [365, 390], [355, 401], [332, 387]], [[430, 427], [452, 438], [442, 449], [418, 437]]].forEach(q => {
    out.push(`<path d="M${q.join('L')}z" fill="#000"/>`);
    L([mix(q[0], q[1], .2), mix(q[1], q[2], .4)], W, 3, '5 1'); L([mix(q[0], q[3], .6), mix(q[3], q[2], .6)], W, 1);
    L([mix(q[0], q[1], .3), mix(q[3], q[2], .2)], B, 1); L([mix(q[0], q[1], .6), mix(q[3], q[2], .5)], B, 1); L([...q, q[0]], '#9b0c0c', 2, '4 1'); });
  mesh([[345, 417], [352, 420], [354, 426], [347, 423]], 3, 3, '#0ff', '2 1'); mesh([[393, 446], [401, 449], [403, 453], [395, 450]], 3, 3, '#0ff', '2 1');

  /* sill and door */
  mesh([[514, 393], [600, 347], [630, 340], [528, 412]], 2, 6, W, '4 2');
  [0, 3, 6, 12].forEach((o, i) => L([[528, 414 - o], [629, 363 - o]], i === 2 ? G : W, i < 2 ? 2 : 1, i % 2 ? '5 1' : ''));
  mesh([[520, 388], [594, 349], [590, 378], [533, 410]], 6, 3, O, '', 1);
  bundle([520, 386], [602, 344], 7, 12, W, '3 1');
  clutter('sill', [[520, 388], [604, 340], [640, 330], [630, 360], [530, 412]], 30, [W, W, O], [F, F, V], 22, '4 1');
  L([[530, 412], [580, 386], [592, 372], [596, 340]], '#777', 1.5, '4 1'); L([[598, 339], [592, 366]], S, 1.5, '3 1');

  /* cabin interior */
  const cab = [[402, 328], [470, 286], [516, 268], [582, 305], [598, 337], [512, 386], [472, 382], [402, 342]];
  out.push(`<path d="M${cab.join('L')}z" fill="#000" stroke="none"/>`);
  clutter('cab1', cab, 70, [B], [F, F, [-.3, 1], R], 42, '');
  mesh([[403, 342], [403, 326], [466, 297], [463, 330]], 3, 9, O, '');
  mesh([[403, 332], [452, 312], [523, 350], [475, 383]], 7, 7, '#b43200', '5 1');
  clutter('cab2', cab, 190, [O, '#a82e00', '#d53d05', '#5a1a00'], [R, V, F, R, [-.4, 1]], 30, '');
  mesh([[403, 342], [456, 298], [512, 330], [492, 386]], 4, 6, W, '5 3');
  clutter('cab3', [[536, 335], [580, 312], [598, 337], [536, 372]], 36, ['#c63a04', O, B], [F, V, R], 30, '');
  clutter('cab5', [[500, 290], [582, 312], [560, 330], [500, 330]], 50, ['#c63a04', O], [V, [-.5, 1], F], 30, '');
  clutter('cab4', [[462, 296], [512, 268], [578, 304], [530, 333]], 30, [W, '#e98f75'], [R, F], 40, '4 2');
  clutter('seat', [[490, 352], [496, 342], [502, 352], [502, 360], [490, 358]], 22, ['#d99552', '#c67b35'], [F, R], 9, '');
  P('M448 368q20 -6 30 -2t-4 8M455 372l30 8', '#e98f75', 1);
  out.push('<circle cx="512" cy="350" r="6" fill="#4a302a" stroke="none"/><path d="M508 350l10 8-2 8" stroke="#d07010" stroke-width="3"/>');

  /* cabin frame */
  out.push(`<path d="M402 324L440 301L472 276Q492 266 520 264L514 269Q492 271 477 281L440 304L405 328z" fill="${S}" stroke="none"/>`);
  L([[410, 319], [441, 297], [491, 269]], B, 1, '2 2');
  [0, 3].forEach(o => { L([[402, 326 + o], [404, 345 + o], [473, 383 + o], [506, 386 + o]], S, 1, o ? '3 1' : ''); L([[463, 296 + o], [522, 329 + o], [534, 333 + o], [582, 307 + o], [515, 267 + o]], S, 1, o ? '3 1' : ''); L([[528 + o, 333], [503 + o, 387]], o ? '#c3aaa3' : S, 2, o ? '3 1' : ''); });
  L([[524, 330], [534, 338], [536, 376]], S, 2); L([[533, 340], [534, 375]], '#ccc', 1.5, '3 1');
  L([[453, 313], [478, 278]], '#777', 2, '3 1'); L([[507, 388], [560, 362], [600, 338]], S, 2, '3 1');
  out.push(`<path d="M580 309l9-1 17 27h-10z" fill="#000" stroke="${S}" stroke-width="2"/><path d="M584 314h7M588 321h7M592 328h8" stroke="${B}"/>`);

  /* wheel arches and wheels */
  P('M350 380q1-32 18-42t26 4M353 382q2-32 16-40M372 338l18 5', M, 1.5, '4 1');
  P('M660 316q6 4 12 2M672 316q10-6 16 0t6 18l-4-2M676 320q10-2 12 10M642 352l-8 10-10-2', M, 1.5, '4 1');
  P('M514 408l10 6 4 12-6-3-6-11M475 446l-4 16', M, 1.5, '3 1');
  wheel(378, 364, 15, 21); wheel(500, 436, 15, 22); wheel(537, 269, 16, 21); wheel(665, 344, 17, 21);
  clutter('spokes', [[528, 252], [545, 248], [550, 268], [530, 270]], 16, [W, '#033'], [F, V], 9, '2 1');

  /* lamps and intakes */
  [[[593, 210], [621, 226], [620, 239], [595, 223]], [[680, 259], [708, 275], [708, 285], [682, 272]]].forEach(q => {
    out.push(`<path d="M${q.join('L')}z" fill="#000"/>`);
    mesh(q, 8, 2, '#85440c'); [0, .36, .5, .68, 1].forEach(t => L([mix(q[0], q[1], t), mix(q[3], q[2], t)], '#f00', 2)); L([mix(q[0], q[3], .5), mix(q[1], q[2], .5)], '#f00', 2, '3 5'); });
  [[609, 273, 623, 260], [615, 276, 630, 264], [651, 298, 665, 284], [659, 301, 672, 289]].forEach(([a, b, c, d]) => L([[a, b], [c, d]], '#ffb900', 5));
  L([[663, 304], [671, 294]], M, 1.5);
  return out.join('');
}
define('drawing-view', `:host{display:flex;flex:1;min-width:0;background:#000}.c{flex:1;min-width:0;display:flex;flex-direction:column}.v{flex:1;min-height:0;position:relative}.v>svg{display:block;width:100%;height:100%;position:absolute}
.w{position:absolute;right:7px;top:4px;display:flex;gap:6px}.f{display:flex;align-items:center;height:21px;background:linear-gradient(90deg,#939393,#bababa);padding-left:6px}
.m{width:62px;height:19px;align-self:flex-start;background:#c9c9c9;justify-content:center;font-size:12px;clip-path:polygon(0 0,100% 0,90% 100%,12% 100%);border-bottom:1px solid #666;padding-right:8px}
.x{margin-left:auto;margin-right:8px;align-self:flex-end}.a{display:flex;height:21px;width:40px;background:#f2f2f2;border-left:5px solid #858585;align-items:center;justify-content:space-evenly}
.s{display:flex;flex-direction:column;width:21px;background:#f5f5f5}.s scroll-bar{flex:1}.s i{height:21px;margin-left:1px;background:linear-gradient(#aaa,#8c8c8c)}`,
() => `<div class="c"><div class="v"><svg viewBox="256 172 620 332" role="img" aria-label="兰博基尼线框图" fill="none" shape-rendering="crispEdges">${drawCar()}</svg>
<div class="w"><button aria-label="最小化"><svg width="11" height="10"><path d="M0 5.500h11v4H0z" fill="#fff" stroke="#447"/></svg></button><button aria-label="还原"><svg width="12" height="11"><path d="M4.500 1.500h6v5h-6zM1.500 4.500h6v5h-6z" fill="#223" stroke="#e8f0f8" stroke-width="2"/></svg></button><button aria-label="关闭"><svg width="11" height="10"><path d="M1.500 1.500l8 7M9.500 1.500l-8 7" stroke="#e8f0f8" stroke-width="2.500"/></svg></button></div></div>
<div class="f"><button class="m">Model</button><chevron-button class="x" label="布局列表"></chevron-button><div class="a"><button aria-label="左"><svg width="5" height="7"><path d="M4 0v7L0 3.500z" fill="#222"/></svg></button><button aria-label="右"><svg width="5" height="7"><path d="M1 0v7l4-3.500z" fill="#222"/></svg></button></div></div></div>
<div class="s"><scroll-bar pos="40"></scroll-bar><i></i></div>`);

/* ---------- command line ---------- */
define('command-line', `:host{display:flex;flex-direction:column;position:relative;flex:1}.o{display:flex;flex:1;border:1px solid #8fb7d8;border-top-color:#4f8fc4;background:#fff;padding-right:1px}textarea{flex:1;border:0;resize:none;outline:0;font:13px "Noto Sans CJK SC"}
.i{display:flex;height:22px;background:#c3c7ce}label{width:61px;padding:4px 0 0 7px;font-size:14px;white-space:nowrap}input{flex:1;min-width:0;border:0;border-left:1px solid #b8d0e4;background:#fff;padding:0 4px;outline:0}
.m{position:absolute;right:38px;bottom:0;pointer-events:none}`,
`<div class="o"><textarea aria-label="命令历史" readonly></textarea><scroll-bar></scroll-bar></div><div class="i"><label for="c">命令行:</label><input id="c"></div>
<svg class="m" width="170" height="78" fill="#fff" stroke="#dcdcdc" stroke-width="2" paint-order="stroke"><g font-family="Liberation Sans" font-weight="bold"><text x="0" y="50" font-size="36">Bai</text><text x="104" y="49" font-size="27" font-family="Noto Sans CJK SC">经验</text><text x="1" y="74" font-size="18">jingyan.baidu.com</text></g><path d="M78 25q7 0 11 8 9 7 9 13 0 9-12 9-8-2-16 0-10 0-11-8 0-7 9-14 4-8 10-8z"/><ellipse cx="61" cy="22" rx="6" ry="8"/><ellipse cx="72" cy="11" rx="6" ry="8"/><ellipse cx="87" cy="12" rx="6" ry="8"/><ellipse cx="96" cy="25" rx="6" ry="7"/><text x="66" y="50" font-size="21" font-weight="bold" font-family="Liberation Sans">du</text></svg>`);

/* ---------- status bar ---------- */
define('status-bar', `:host{display:flex;height:20px;background:linear-gradient(#aeaeae,#8c8c8c);border-top:1px solid #555;font:13px/17px "Liberation Sans",sans-serif}
div{border-right:1px solid #ddd;box-shadow:-1px 0 #777 inset;padding-left:5px;white-space:nowrap;overflow:hidden}.n{width:100px;padding-left:7px}.p{width:99px}button{width:20px;border-right:1px solid #ddd;justify-content:center;--s:16px}.c{flex:251}.e{flex:149}.z{border:0;box-shadow:none;width:216px;display:flex;justify-content:space-between;align-items:center;padding-right:3px}`,
`<div class="n">3dlamborgi...</div><div class="p">1/1</div>${['magstat', 'grid', 'ortho', 'osnap'].map(i => `<button aria-label="${i}"><cad-icon name="${i}"></cad-icon></button>`).join('')}<div class="c">(16.96642; 17.60902; 0)</div><div class="e"></div><div class="z"><span>180.6008 x 141.5804 x 173.8424</span><svg width="12" height="14"><path d="M9 3h2M9 7h2M5 7h2M9 11h2M5 11h2M1 11h2" stroke="#333" stroke-width="2"/></svg></div>`);

/* ---------- application ---------- */
define('cad-app', `:host{display:flex;flex-direction:column;height:100vh;min-height:500px;padding:0 3px 2px;background:#000}
main{display:flex;flex:1;min-height:0}aside{display:flex;flex-direction:column;width:253px;background:#f0f0f0;padding:2px 3px 0 0}.fav{flex:1;margin-top:7px}.prop{border-bottom:1px solid #fff}.cmd{height:103px;padding-top:5px;background:#f0f0f0}`,
`<title-bar></title-bar><tab-strip></tab-strip><cad-ribbon></cad-ribbon><doc-bar></doc-bar>
<main><aside><dock-panel class="prop" label="属性"><property-grid></property-grid></dock-panel><dock-panel class="fav" inset label="收藏夹"><favorites-list></favorites-list></dock-panel></aside><drawing-view></drawing-view></main>
<dock-panel class="cmd" label="命令行"><command-line></command-line></dock-panel><status-bar></status-bar>`);
</script>
</body>
</html>
